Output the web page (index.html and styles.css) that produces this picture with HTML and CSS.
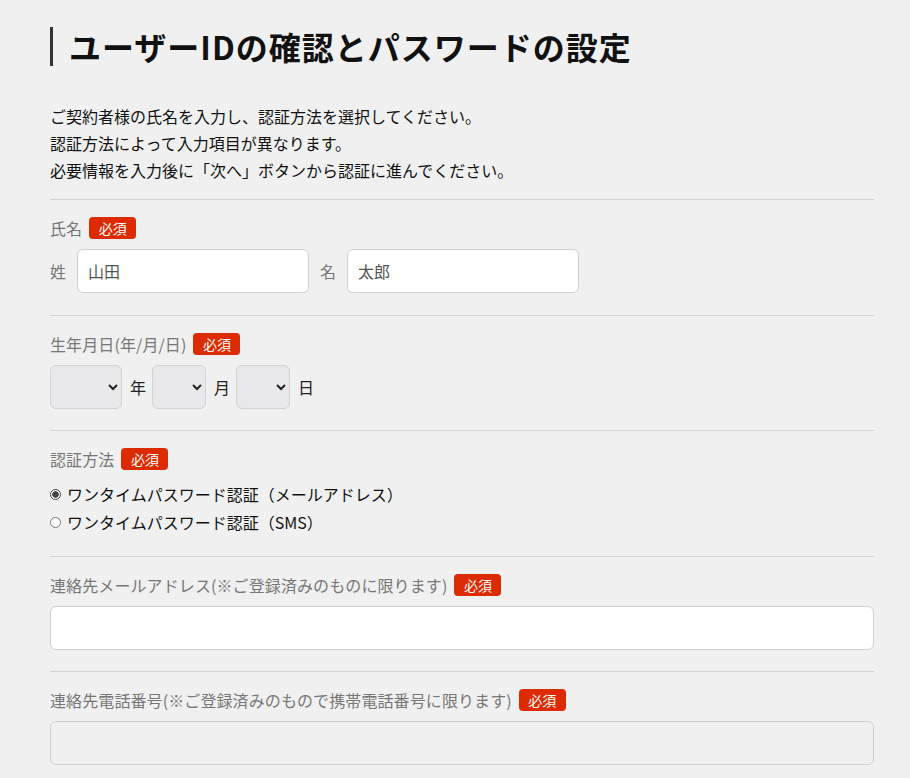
FILE: index.html
```html
<!DOCTYPE html>
<html lang="ja">
<head>
<meta charset="utf-8">
<title>ユーザーIDの確認とパスワードの設定</title>
<link rel="stylesheet" href="styles.css">
</head>
<body>
<main class="page">
  <h1 class="title">ユーザーIDの確認とパスワードの設定</h1>
  <p class="intro">ご契約者様の氏名を入力し、認証方法を選択してください。<br>認証方法によって入力項目が異なります。<br>必要情報を入力後に「次へ」ボタンから認証に進んでください。</p>

  <section class="field field-name">
    <div class="label-row"><span class="label">氏名</span><span class="badge">必須</span></div>
    <div class="name-row">
      <label class="name-group"><span class="sub">姓</span><input class="text-input name-input" type="text" value="山田"></label>
      <label class="name-group"><span class="sub">名</span><input class="text-input name-input" type="text" value="太郎"></label>
    </div>
  </section>

  <section class="field">
    <div class="label-row"><span class="label">生年月日(年/月/日)</span><span class="badge">必須</span></div>
    <div class="date-row">
      <select class="sel sel-year"><option></option></select><span class="unit">年</span>
      <select class="sel sel-small"><option></option></select><span class="unit">月</span>
      <select class="sel sel-small"><option></option></select><span class="unit">日</span>
    </div>
  </section>

  <section class="field field-radio">
    <div class="label-row"><span class="label">認証方法</span><span class="badge">必須</span></div>
    <div class="radios">
      <label class="radio"><span class="dot dot-on"></span>ワンタイムパスワード認証（メールアドレス）</label>
      <label class="radio"><span class="dot"></span>ワンタイムパスワード認証（SMS）</label>
    </div>
  </section>

  <section class="field">
    <div class="label-row"><span class="label">連絡先メールアドレス(※ご登録済みのものに限ります)</span><span class="badge">必須</span></div>
    <input class="text-input wide" type="text">
  </section>

  <section class="field">
    <div class="label-row"><span class="label">連絡先電話番号(※ご登録済みのもので携帯電話番号に限ります)</span><span class="badge">必須</span></div>
    <input class="text-input wide disabled" type="text" disabled>
  </section>
</main>
</body>
</html>
```
FILE: styles.css
```css
* { box-sizing: border-box; }
html, body {
  margin: 0;
  background: #f0f0f0;
}
body {
  font-family: "Noto Sans CJK JP", "Noto Sans", sans-serif;
  color: #111;
  font-size: 16px;
}
.page {
  width: 824px;
  margin-left: 50px;
  padding-top: 27px;
}
.title {
  margin: 0;
  border-left: 3px solid #333;
  padding-left: 16px;
  font-size: 32px;
  font-weight: 700;
  letter-spacing: 1px;
  line-height: 39px;
  height: 39px;
  color: #111;
}
.intro {
  margin: 37px 0 15px;
  line-height: 27px;
  font-size: 16px;
  color: #111;
}
.field {
  border-top: 1px solid #d4d4d4;
  padding: 17px 0 21px;
}
.field-name { padding-bottom: 22px; }
.field-radio { padding-bottom: 20px; }
.label-row {
  display: flex;
  align-items: center;
  height: 22px;
  margin-bottom: 10px;
}
.label {
  color: #777;
  font-size: 16px;
  line-height: 22px;
  letter-spacing: 0.1px;
}
.badge {
  margin-left: 7px;
  background: #dc2b00;
  color: #fff;
  font-size: 14px;
  line-height: 22px;
  height: 22px;
  padding: 0 9.5px;
  border-radius: 4px;
}
.name-row {
  display: flex;
  gap: 11px;
}
.name-group {
  display: flex;
  align-items: center;
  gap: 11px;
}
.sub { color: #777; }
.text-input {
  height: 44px;
  border: 1px solid #cfcfcf;
  border-radius: 6px;
  background: #fff;
  font-family: inherit;
  font-size: 16px;
  color: #555;
  padding: 0 10px;
  outline: none;
}
.name-input { width: 232px; }
.wide { width: 100%; display: block; }
.disabled { background: #f0f0f0; }
.date-row {
  display: flex;
  align-items: center;
}
.sel {
  height: 44px;
  border: 1px solid #d2d2d4;
  border-radius: 6px;
  background-color: #e8e8eb;
  font-family: inherit;
  font-size: 16px;
  color: #222;
}
.sel-year { width: 72px; }
.sel-small { width: 54px; }
.unit {
  margin: 0 6px 0 8px;
  color: #222;
}
.radios {
  display: flex;
  flex-direction: column;
}
.radio {
  display: flex;
  align-items: center;
  height: 28px;
  color: #111;
}
.dot {
  width: 11px;
  height: 11px;
  border-radius: 50%;
  border: 1px solid #777;
  background: #fff;
  margin-right: 6px;
  flex: none;
}
.dot-on {
  border-color: #444;
  background: radial-gradient(circle, #444 0 3px, #fff 3.5px);
}
```
